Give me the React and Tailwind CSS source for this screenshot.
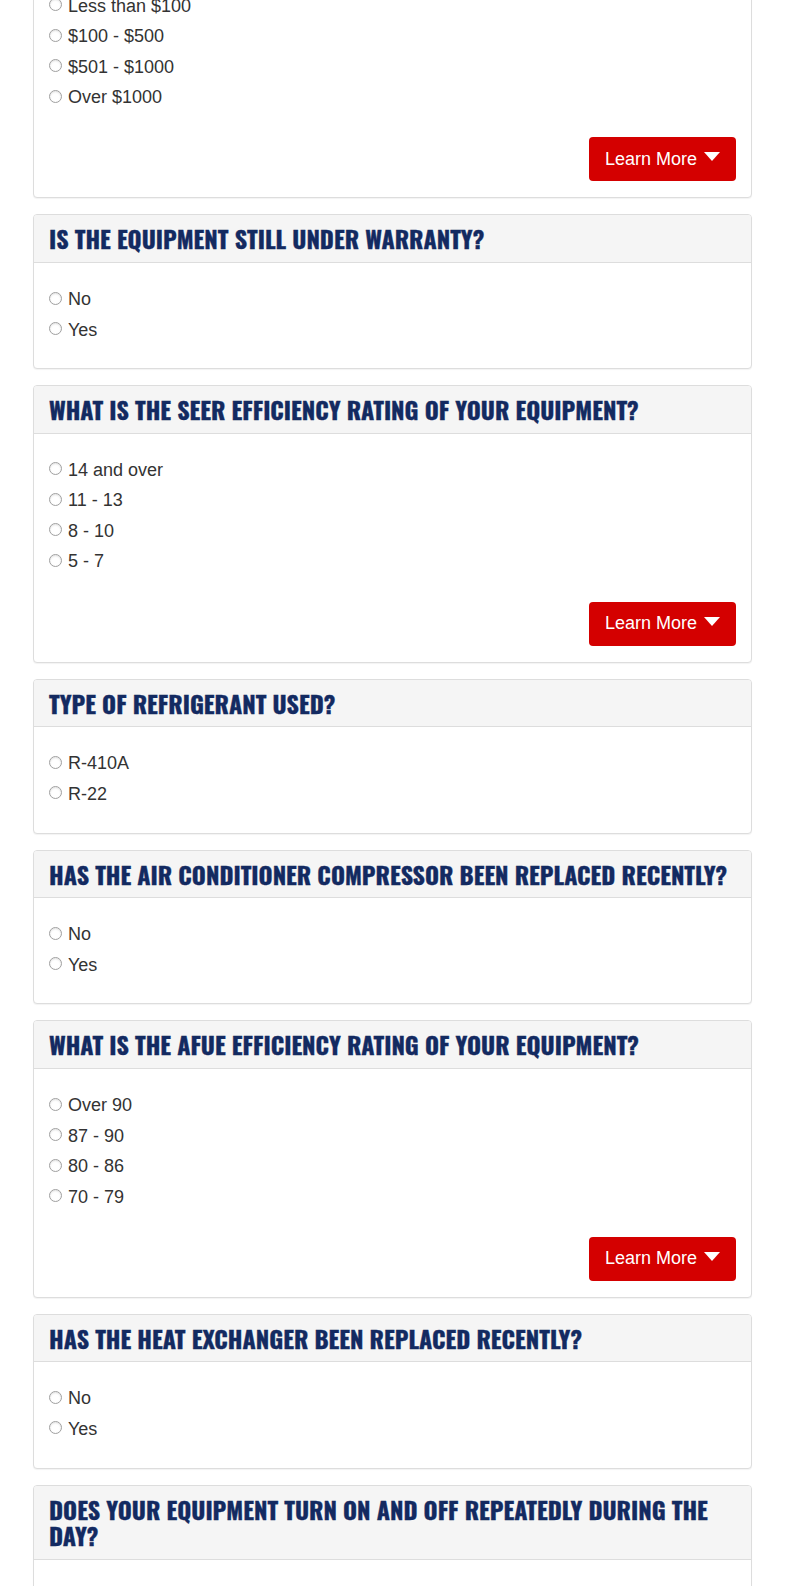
// App.jsx – HVAC equipment questionnaire (scrolled view)

const QUESTIONS = [
    {
        title: 'WHAT IS THE ESTIMATED COST OF THE REPAIR?',
        options: ['Less than $100', '$100 - $500', '$501 - $1000', 'Over $1000'],
        learnMore: true,
    },
    { title: 'IS THE EQUIPMENT STILL UNDER WARRANTY?', options: ['No', 'Yes'] },
    {
        title: 'WHAT IS THE SEER EFFICIENCY RATING OF YOUR EQUIPMENT?',
        options: ['14 and over', '11 - 13', '8 - 10', '5 - 7'],
        learnMore: true,
    },
    { title: 'TYPE OF REFRIGERANT USED?', options: ['R-410A', 'R-22'] },
    { title: 'HAS THE AIR CONDITIONER COMPRESSOR BEEN REPLACED RECENTLY?', options: ['No', 'Yes'] },
    {
        title: 'WHAT IS THE AFUE EFFICIENCY RATING OF YOUR EQUIPMENT?',
        options: ['Over 90', '87 - 90', '80 - 86', '70 - 79'],
        learnMore: true,
    },
    { title: 'HAS THE HEAT EXCHANGER BEEN REPLACED RECENTLY?', options: ['No', 'Yes'] },
    { title: 'DOES YOUR EQUIPMENT TURN ON AND OFF REPEATEDLY DURING THE DAY?', options: ['No', 'Yes'] },
]

function Radio({ label, name }) {
    return (
        <label className="flex items-center h-[30.5px] cursor-pointer">
            <input type="radio" name={name} className="sr-only peer" />
            <span className="w-[13px] h-[13px] rounded-full border border-[#a0a0a0] bg-white shadow-[inset_0_1px_2px_rgba(0,0,0,0.12)] mr-[6px] -mt-[2px] shrink-0" />
            <span className="text-[18px] leading-none text-[#333]">{label}</span>
        </label>
    )
}

function Caret() {
    return (
        <svg width="16" height="10" viewBox="0 0 16 10" className="ml-[7px] -mt-[4px]">
            <path d="M0 0 H16 L8 9 Z" fill="#fff" />
        </svg>
    )
}

function QuestionCard({ q, idx }) {
    return (
        <div className="bg-white border border-[#ddd] rounded-[4px] shadow-[0_1px_1px_rgba(0,0,0,0.05)] mb-[16px]">
            <div className="bg-[#f5f5f5] border-b border-[#ddd] rounded-t-[3px] px-[15px] py-[10px]">
                <h3 className="font-['Oswald','Liberation_Sans_Narrow','DejaVu_Sans_Condensed',sans-serif] font-bold text-[24px] leading-[1.1] text-[#132a61] [-webkit-text-stroke:0.35px_#132a61]">
                    {q.title}
                </h3>
            </div>
            <div className={`px-[15px] pt-[21px] ${q.learnMore ? 'pb-[16px]' : 'pb-[23.5px]'}`}>
                <div className="flex flex-col">
                    {q.options.map((opt) => (
                        <Radio key={opt} label={opt} name={`q${idx}`} />
                    ))}
                </div>
                {q.learnMore && (
                    <div className="flex justify-end mt-[25px]">
                        <button className="flex items-center h-[44px] px-[16px] bg-[#d40000] rounded-[4px] text-white text-[18px] font-['Liberation_Sans',Arial,sans-serif]">
                            Learn More
                            <Caret />
                        </button>
                    </div>
                )}
            </div>
        </div>
    )
}

export default function App() {
    return (
        <div className="bg-white h-[1586px] overflow-hidden font-['Liberation_Sans',Arial,sans-serif]">
            <div className="px-[33px] -mt-[79px]">
                {QUESTIONS.map((q, i) => (
                    <QuestionCard key={i} q={q} idx={i} />
                ))}
            </div>
        </div>
    )
}
